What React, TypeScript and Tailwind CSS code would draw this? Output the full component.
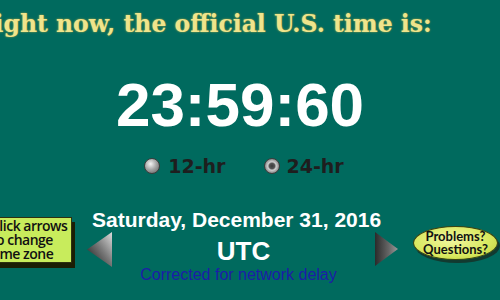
export default function App() {
  return (
    <div className="w-[500px] h-[300px] overflow-hidden bg-[#006a5e] flex flex-col">
      {/* header line, clipped on the left like the original page */}
      <div className="ml-[-25px] pt-[13px] whitespace-nowrap font-['DejaVu_Serif',serif] font-bold text-[23.5px] leading-none text-[#efe48c] [text-shadow:0_0_2px_#b8a840]">
        Right now, the official U.S. time is:
      </div>

      <div className="w-[480px] flex flex-col items-center">
        <div className="mt-[37px] font-['Liberation_Sans',Arial,sans-serif] font-bold text-[62px] leading-none text-white">
          23:59:60
        </div>

        <div className="mt-[21px] ml-[8px] flex items-center gap-[38px] font-['DejaVu_Sans',sans-serif] font-bold text-[19px] leading-none text-[#1e1e1e]">
          <label className="flex items-center gap-[8px]">
            <span className="w-[16px] h-[16px] rounded-full border border-[#3c3c3c] bg-[radial-gradient(circle_at_40%_35%,#f4f4f4,#a8a8a8_45%,#5a5a5a)]" />
            12-hr
          </label>
          <label className="flex items-center gap-[7px]">
            <span className="w-[16px] h-[16px] rounded-full border border-[#3c3c3c] bg-[radial-gradient(circle,#3a3a3a_0,#555_28%,#cfcfcf_42%,#9a9a9a_65%,#4a4a4a)]" />
            24-hr
          </label>
        </div>
      </div>

      <div className="mt-[33px] flex items-start">
        <div className="ml-[-10px] mt-[8px] w-[82px] h-[46px] overflow-hidden border border-[#2e3010] bg-[#c8ec5c] shadow-[3px_5px_0_#1c1e04] flex flex-col items-end justify-center pr-[3px] font-['Open_Sans',sans-serif] font-semibold text-[14px] leading-[14px] tracking-[-0.5px] text-[#111]">
          <span className="w-[77px] whitespace-nowrap">Click arrows</span>
          <span className="w-[77px] whitespace-nowrap">to change</span>
          <span className="w-[77px] whitespace-nowrap">time zone</span>
        </div>

        <div className="ml-[15px] w-[311px] flex flex-col">
          <div className="pl-[5px] whitespace-nowrap font-['Liberation_Sans',Arial,sans-serif] font-bold text-[21px] leading-none text-white">
            Saturday, December 31, 2016
          </div>
          <div className="mt-[2px] flex items-start">
            <svg width="25" height="35" viewBox="0 0 25 35" aria-hidden="true">
              <defs>
                <linearGradient id="la" x1="0" y1="1" x2="1" y2="0">
                  <stop offset="0" stopColor="#111" />
                  <stop offset="0.55" stopColor="#7a7a7a" />
                  <stop offset="1" stopColor="#dcdcdc" />
                </linearGradient>
              </defs>
              <polygon points="0,17.5 25,0 25,35" fill="url(#la)" />
            </svg>
            <div className="w-[263px] flex flex-col items-center font-['Liberation_Sans',Arial,sans-serif]">
              <div className="mt-[6px] font-bold text-[26px] leading-none text-white">UTC</div>
              <div className="mt-[3px] mr-[10px] text-[16px] leading-none text-[#1c1ca8] whitespace-nowrap">
                Corrected for network delay
              </div>
            </div>
            <svg width="23" height="35" viewBox="0 0 23 35" aria-hidden="true">
              <defs>
                <linearGradient id="ra" x1="0" y1="0" x2="1" y2="0">
                  <stop offset="0" stopColor="#2a2a2a" />
                  <stop offset="0.6" stopColor="#666" />
                  <stop offset="1" stopColor="#9a9a9a" />
                </linearGradient>
              </defs>
              <polygon points="0,0 23,17 0,34" fill="url(#ra)" />
            </svg>
          </div>
        </div>

        <div className="ml-[15px] mt-[17px] w-[85px] h-[34px] rounded-[50%] border border-[#3e4410] bg-[radial-gradient(ellipse_at_45%_40%,#f2f7a0,#d8e85e_60%,#b8ca34)] shadow-[2px_3px_0_#123a30] flex flex-col items-center justify-center font-['Lato',sans-serif] font-bold text-[13px] leading-[13px] text-[#111]">
          <span>Problems?</span>
          <span>Questions?</span>
        </div>
      </div>
    </div>
  );
}
